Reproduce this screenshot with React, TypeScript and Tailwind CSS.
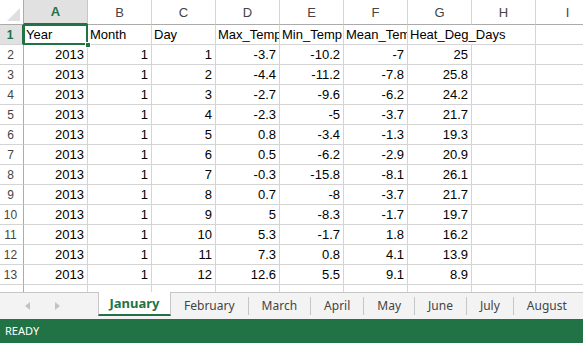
import React from 'react'

const COLS = ['A', 'B', 'C', 'D', 'E', 'F', 'G', 'H', 'I']

const DATA: (number | string)[][] = [
  [2013, 1, 1, -3.7, -10.2, -7, 25],
  [2013, 1, 2, -4.4, -11.2, -7.8, 25.8],
  [2013, 1, 3, -2.7, -9.6, -6.2, 24.2],
  [2013, 1, 4, -2.3, -5, -3.7, 21.7],
  [2013, 1, 5, 0.8, -3.4, -1.3, 19.3],
  [2013, 1, 6, 0.5, -6.2, -2.9, 20.9],
  [2013, 1, 7, -0.3, -15.8, -8.1, 26.1],
  [2013, 1, 8, 0.7, -8, -3.7, 21.7],
  [2013, 1, 9, 5, -8.3, -1.7, 19.7],
  [2013, 1, 10, 5.3, -1.7, 1.8, 16.2],
  [2013, 1, 11, 7.3, 0.8, 4.1, 13.9],
  [2013, 1, 12, 12.6, 5.5, 9.1, 8.9],
]

const HEAD = ['Year', 'Month', 'Day', 'Max_Temp', 'Min_Temp', 'Mean_Temp']
const TABS = ['February', 'March', 'April', 'May', 'June', 'July', 'August']

const cell = 'border-r border-b border-[#d4d4d4] overflow-hidden whitespace-nowrap leading-[20px] text-[13px] text-black'

function RowNum({ n, sel }: { n?: number; sel?: boolean }) {
  return sel ? (
    <div className="bg-[#e1e1e1] border-r-2 border-r-[#217346] border-b border-b-[#d4d4d4] text-center pr-[2px] text-[12px] leading-[20px] font-bold text-[#217346]">{n}</div>
  ) : (
    <div className="bg-white border-r border-r-[#ababab] border-b border-b-[#d4d4d4] text-center pr-[2px] text-[12px] leading-[20px] text-[#444]">{n}</div>
  )
}

export default function App() {
  return (
    <div className="w-[583px] h-[343px] overflow-hidden bg-white flex flex-col" style={{ fontFamily: '"Liberation Sans", Arial, sans-serif' }}>
      <div className="h-[292px] shrink-0 overflow-hidden">
        <div className="grid grid-cols-[24px_repeat(9,64px)] grid-rows-[25px_repeat(14,20px)] w-max">
          {/* corner */}
          <div className="relative bg-white border-r border-b border-[#ababab]">
            <div className="absolute right-[3px] bottom-[3px] w-0 h-0 border-l-[13px] border-l-transparent border-b-[13px] border-b-[#dfdfdf]" />
          </div>
          {COLS.map(c =>
            c === 'A' ? (
              <div key={c} className="bg-[#e1e1e1] border-r border-r-[#c6c6c6] border-b-2 border-b-[#217346] flex items-center justify-center text-[13px] font-bold text-[#217346]">{c}</div>
            ) : (
              <div key={c} className="bg-white border-r border-r-[#d4d4d4] border-b border-b-[#ababab] flex items-center justify-center pt-px text-[13px] text-[#444]">{c}</div>
            )
          )}

          {/* row 1 */}
          <RowNum n={1} sel />
          {HEAD.map((h, i) => (
            <div key={h} className={`${cell} pl-[2px] ${i === 0 ? 'relative overflow-visible' : ''}`}>
              {h}
              {i === 0 && (
                <>
                  <div className="absolute -left-[1px] -top-[1px] -right-[1px] -bottom-[1px] border-2 border-[#217346] pointer-events-none" />
                  <div className="absolute -right-[4px] -bottom-[4px] w-[6px] h-[6px] bg-[#217346] border border-white z-10" />
                </>
              )}
            </div>
          ))}
          <div className={`${cell} pl-[2px] col-span-2`}>Heat_Deg_Days</div>
          <div className={cell} />

          {DATA.map((r, ri) => (
            <React.Fragment key={ri}>
              <RowNum n={ri + 2} />
              {COLS.map((c, ci) => (
                <div key={c} className={`${cell} text-right pr-[3px]`}>{r[ci] ?? ''}</div>
              ))}
            </React.Fragment>
          ))}

          <RowNum />
          {COLS.map(c => <div key={c} className={cell} />)}
        </div>
      </div>

      {/* sheet tabs */}
      <div className="h-[27px] shrink-0 bg-[#f3f3f3] flex items-start text-[12px] text-[#444]" style={{ fontFamily: '"Noto Sans", "Open Sans", sans-serif' }}>
        <div className="w-[98px] h-full border-t border-[#c6c6c6] flex items-center pl-[25px] gap-[25px]">
          <span className="w-0 h-0 border-y-[4px] border-y-transparent border-r-[5px] border-r-[#c2c2c2]" />
          <span className="w-0 h-0 border-y-[4px] border-y-transparent border-l-[5px] border-l-[#c2c2c2]" />
        </div>
        <div className="w-[73px] h-[24px] bg-white border-x border-[#c6c6c6] border-b-2 border-b-[#217346] flex items-center justify-center pt-px font-bold text-[#217346] text-[13px]">
          January
        </div>
        <div className="flex-1 h-full border-t border-[#c6c6c6] flex items-center">
          {TABS.map((t, i) => (
            <React.Fragment key={t}>
              {i > 0 && <span className="w-px h-[18px] bg-[#c6c6c6]" />}
              <span className="px-[13px] whitespace-nowrap">{t}</span>
            </React.Fragment>
          ))}
        </div>
      </div>

      {/* status bar */}
      <div className="flex-1 bg-[#217346] text-white text-[11px] flex items-center pl-[5px]" style={{ fontFamily: '"Noto Sans", "Open Sans", sans-serif' }}>
        READY
      </div>
    </div>
  )
}
